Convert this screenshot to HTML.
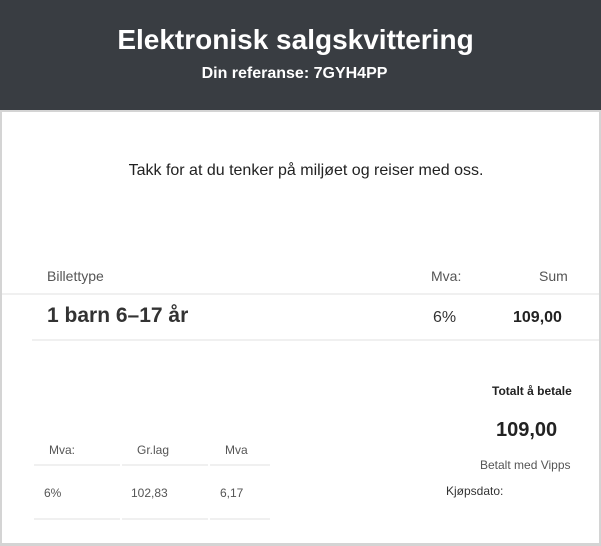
<!DOCTYPE html>
<html><head><meta charset="utf-8"><style>
*{margin:0;padding:0;box-sizing:border-box}
body{width:601px;height:546px;background:#fff;font-family:"Liberation Sans",Arial,sans-serif;position:relative;overflow:hidden;color:#222}
.a{position:absolute;white-space:nowrap}
.hd{position:absolute;left:0;top:0;width:601px;height:110px;background:#393d42}
.box{position:absolute;left:0;top:110px;width:601px;height:436px;border:2px solid #d4d4d4;border-bottom-width:3px}
.ln{position:absolute;height:2px;background:#f0f0f0}
</style></head><body>
<div class="hd"></div>
<div class="a" style="left:-5px;width:601px;text-align:center;top:24px;font-size:28px;font-weight:bold;color:#fff">Elektronisk salgskvittering</div>
<div class="a" style="left:-6px;width:601px;text-align:center;top:65px;font-size:16px;font-weight:bold;color:#fff">Din referanse: 7GYH4PP</div>
<div class="box"></div>
<div class="a" style="left:0;width:612px;text-align:center;top:162px;font-size:16px;color:#222">Takk for at du tenker på miljøet og reiser med oss.</div>
<div class="a" style="left:47px;top:268px;font-size:14px;color:#555">Billettype</div>
<div class="a" style="left:431px;top:268px;font-size:14px;color:#555">Mva:</div>
<div class="a" style="left:539px;top:268px;font-size:14px;color:#555">Sum</div>
<div class="ln" style="left:2px;top:293px;width:597px"></div>
<div class="a" style="left:47px;top:304px;font-size:21px;font-weight:bold;color:#333">1 barn 6–17 år</div>
<div class="a" style="left:433px;top:309px;font-size:16px;color:#333">6%</div>
<div class="a" style="left:513px;top:309px;font-size:16px;font-weight:bold;color:#222">109,00</div>
<div class="ln" style="left:32px;top:339px;width:567px"></div>
<div class="a" style="left:492px;top:384px;font-size:12px;font-weight:bold;color:#222">Totalt å betale</div>
<div class="a" style="left:496px;top:419px;font-size:20px;font-weight:bold;color:#222">109,00</div>
<div class="a" style="left:480px;top:458px;font-size:12px;color:#555">Betalt med Vipps</div>
<div class="a" style="left:446px;top:484px;font-size:12px;color:#333">Kjøpsdato:</div>
<div class="a" style="left:49px;top:443px;font-size:12px;color:#555">Mva:</div>
<div class="a" style="left:137px;top:443px;font-size:12px;color:#555">Gr.lag</div>
<div class="a" style="left:225px;top:443px;font-size:12px;color:#555">Mva</div>
<div class="ln" style="left:34px;top:464px;width:86px"></div>
<div class="ln" style="left:122px;top:464px;width:86px"></div>
<div class="ln" style="left:210px;top:464px;width:60px"></div>
<div class="a" style="left:44px;top:486px;font-size:12px;color:#555">6%</div>
<div class="a" style="left:131px;top:486px;font-size:12px;color:#555">102,83</div>
<div class="a" style="left:220px;top:486px;font-size:12px;color:#555">6,17</div>
<div class="ln" style="left:34px;top:518px;width:86px"></div>
<div class="ln" style="left:122px;top:518px;width:86px"></div>
<div class="ln" style="left:210px;top:518px;width:60px"></div>
</body></html>
